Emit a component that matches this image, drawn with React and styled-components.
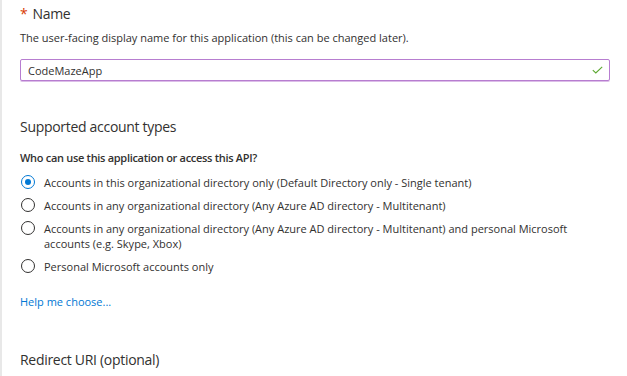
import React from "react";
import styled, { createGlobalStyle } from "styled-components";

const Global = createGlobalStyle`
  html, body { margin: 0; padding: 0; background: #fff; }
  body { font-family: "Open Sans", "Noto Sans", sans-serif; color: #323130; }
`;

const Page = styled.div`
  width: 627px;
  height: 376px;
  box-sizing: border-box;
  border-left: 2px solid #e8e8e8;
  padding: 4px 18px 0 18px;
  overflow: hidden;
`;

const Heading = styled.div`
  font-size: 14px;
  line-height: 20px;
  color: #323130;
  letter-spacing: -0.3px;
  margin-top: ${(p) => p.$top || 0}px;
`;

const Star = styled.span`
  color: #d83b01;
  margin-right: 5px;
`;

const Desc = styled.div`
  font-size: 11px;
  line-height: 16px;
  margin-top: 6px;
`;

const InputWrap = styled.div`
  margin-top: 13px;
  width: 590px;
  height: 22px;
  box-sizing: border-box;
  border: 1px solid #b77dd0;
  box-shadow: 0 1px 0 #dcbde8;
  border-radius: 2px;
  display: flex;
  align-items: center;
  justify-content: space-between;
  padding: 0 6px 0 7px;
`;

const InputText = styled.span`
  font-size: 11px;
  color: #323130;
`;

const Question = styled.div`
  font-size: 11px;
  font-weight: 600;
  line-height: 16px;
  margin-top: 13px;
  letter-spacing: -0.3px;
`;

const Options = styled.div`
  display: flex;
  flex-direction: column;
  gap: 8px;
  margin-top: 9px;
`;

const Option = styled.label`
  display: flex;
  align-items: flex-start;
  gap: 9px;
  font-size: 11px;
  line-height: 15px;
`;

const Radio = styled.span`
  flex: none;
  width: 14px;
  height: 14px;
  box-sizing: border-box;
  border-radius: 50%;
  border: 1px solid ${(p) => (p.$checked ? "#0078d4" : "#323130")};
  display: flex;
  align-items: center;
  justify-content: center;
  margin-left: 1px;
  &::after {
    content: "";
    width: 6px;
    height: 6px;
    border-radius: 50%;
    background: ${(p) => (p.$checked ? "#0078d4" : "transparent")};
  }
`;

const OptionText = styled.span`
  width: 545px;
`;

const Link = styled.a`
  display: block;
  margin-top: 20px;
  font-size: 11px;
  line-height: 16px;
  color: #0078d4;
  text-decoration: none;
`;

const Check = () => (
  <svg width="11" height="8" viewBox="0 0 11 8">
    <path d="M0.8 4.2 L3.8 7 L10.2 0.8" fill="none" stroke="#5ca830" strokeWidth="1.1" />
  </svg>
);

const options = [
  { text: "Accounts in this organizational directory only (Default Directory only - Single tenant)", checked: true },
  { text: "Accounts in any organizational directory (Any Azure AD directory - Multitenant)" },
  { text: "Accounts in any organizational directory (Any Azure AD directory - Multitenant) and personal Microsoft accounts (e.g. Skype, Xbox)" },
  { text: "Personal Microsoft accounts only" },
];

export default function App() {
  return (
    <>
      <Global />
      <Page>
        <Heading>
          <Star>*</Star>Name
        </Heading>
        <Desc>The user-facing display name for this application (this can be changed later).</Desc>
        <InputWrap>
          <InputText>CodeMazeApp</InputText>
          <Check />
        </InputWrap>
        <Heading $top={36}>Supported account types</Heading>
        <Question>Who can use this application or access this API?</Question>
        <Options>
          {options.map((o, i) => (
            <Option key={i}>
              <Radio $checked={o.checked} />
              <OptionText>{o.text}</OptionText>
            </Option>
          ))}
        </Options>
        <Link href="#">Help me choose...</Link>
        <Heading $top={40}>Redirect URI (optional)</Heading>
      </Page>
    </>
  );
}
